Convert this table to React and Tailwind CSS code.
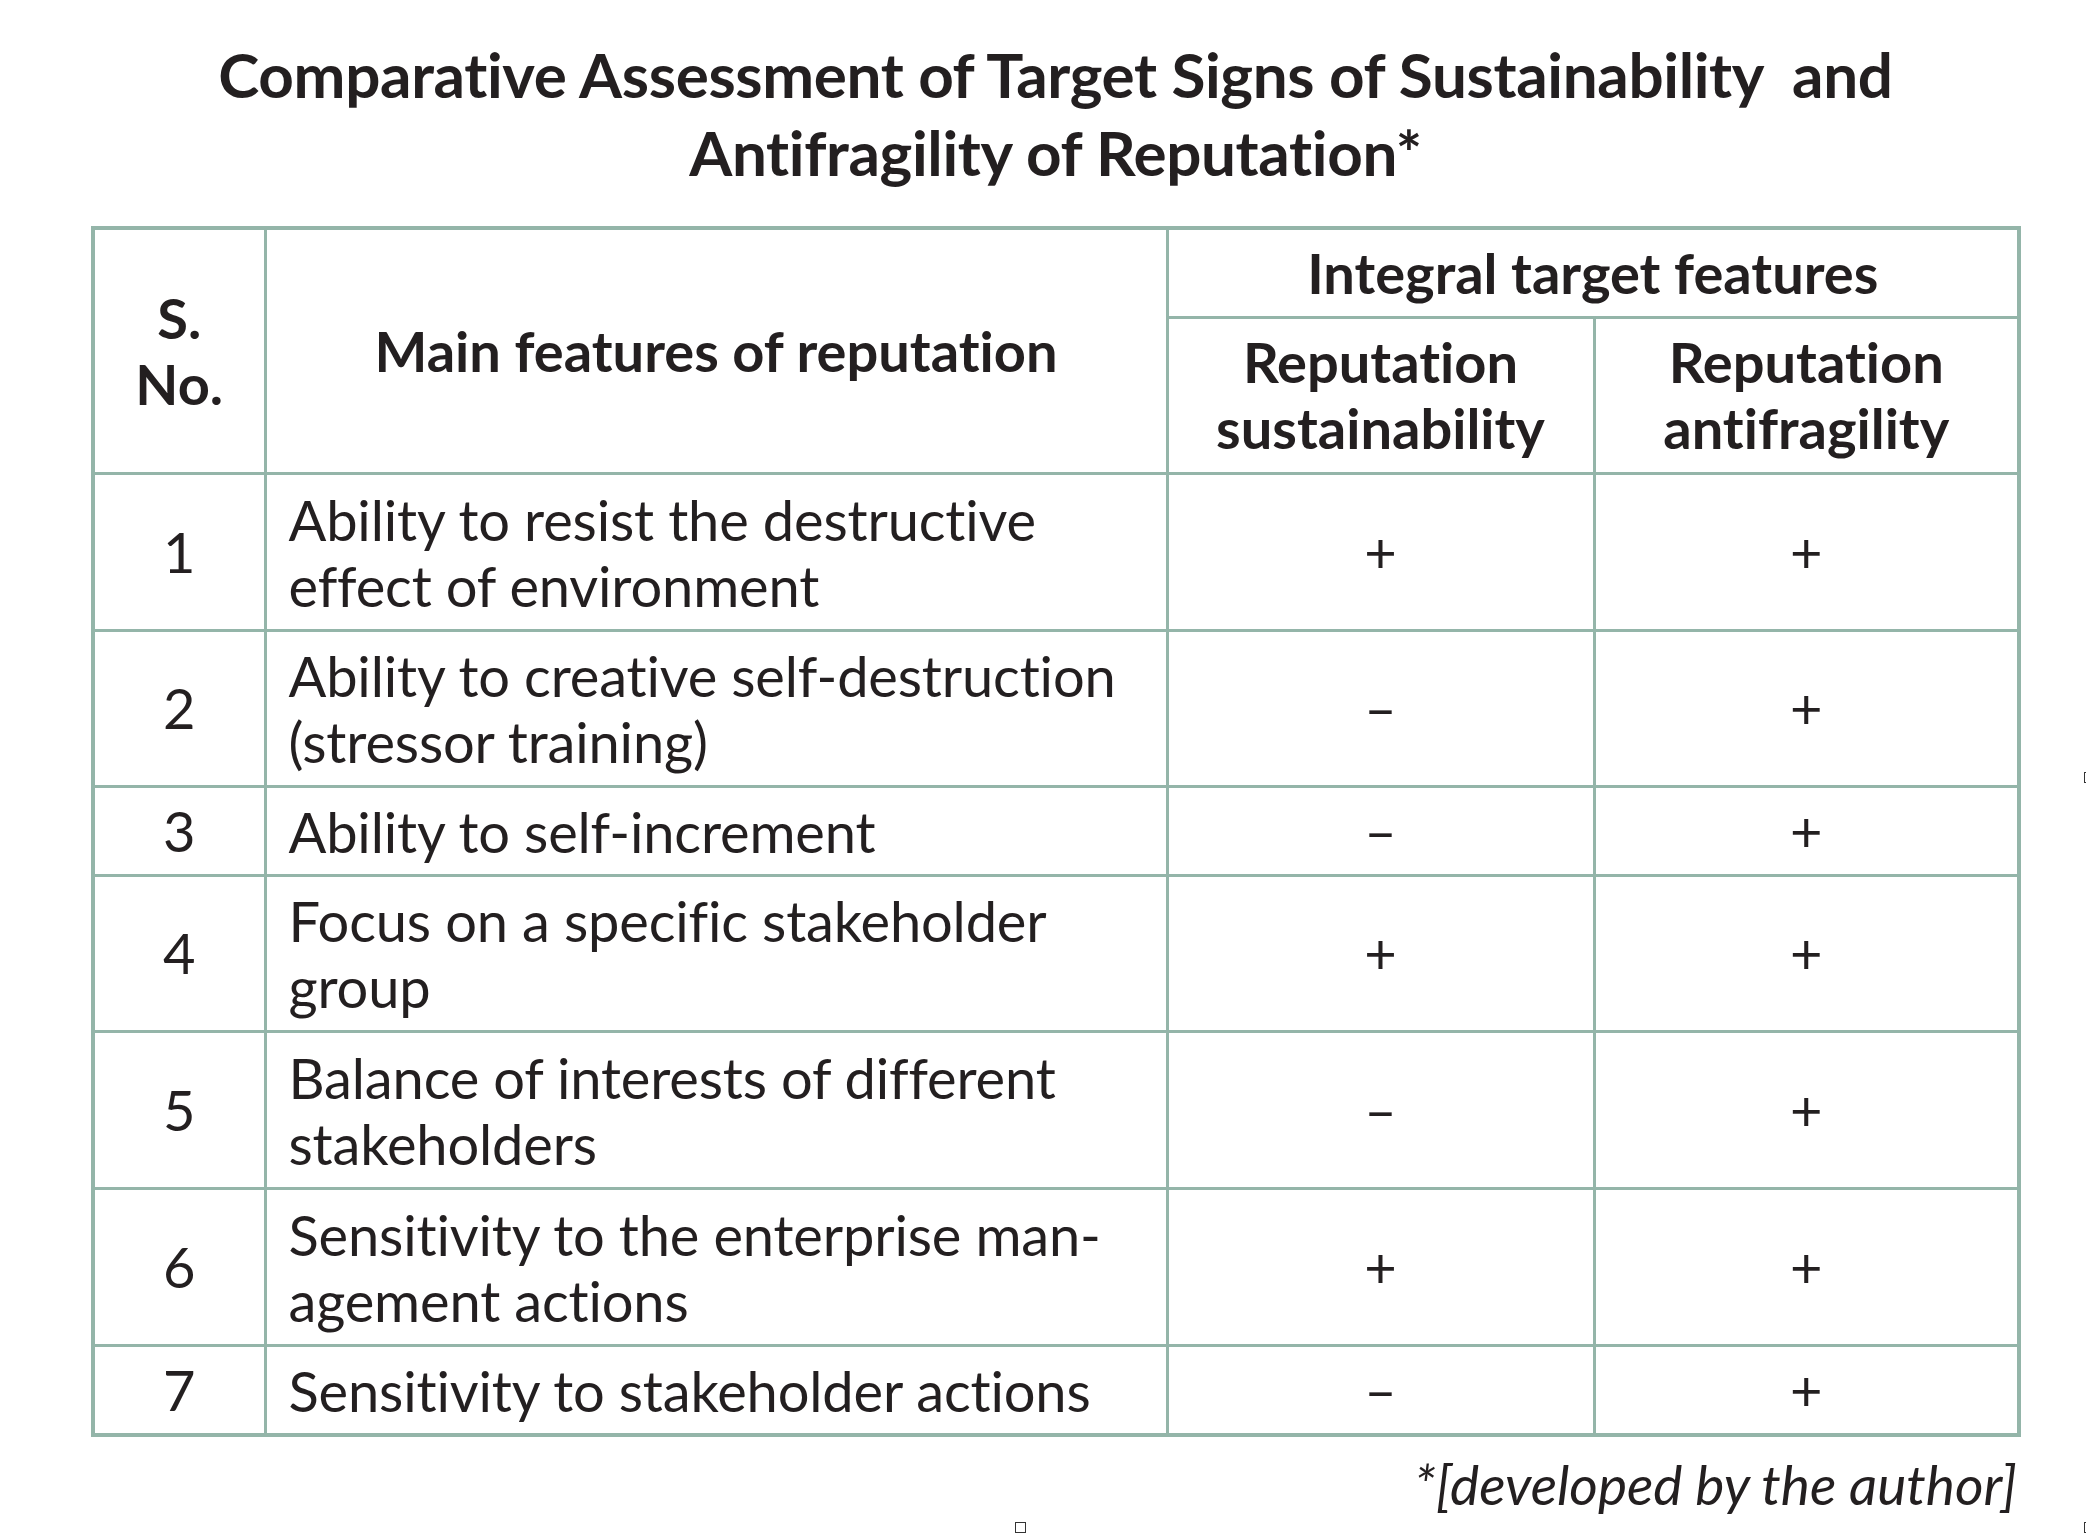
import React from "react";

const rows = [
  { n: "1", text: ["Ability to resist the destructive", "effect of environment"], s: "+", a: "+", h: "h-[157px]" },
  { n: "2", text: ["Ability to creative self-destruction", "(stressor training)"], s: "\u2013", a: "+", h: "h-[156px]" },
  { n: "3", text: ["Ability to self-increment"], s: "\u2013", a: "+", h: "h-[89px]" },
  { n: "4", text: ["Focus on a specific stakeholder", "group"], s: "+", a: "+", h: "h-[156px]" },
  { n: "5", text: ["Balance of interests of different", "stakeholders"], s: "\u2013", a: "+", h: "h-[157px]" },
  { n: "6", text: ["Sensitivity to the enterprise man-", "agement actions"], s: "+", a: "+", h: "h-[157px]" },
  { n: "7", text: ["Sensitivity to stakeholder actions"], s: "\u2013", a: "+", h: "h-[90px]" },
];

const cell = "border-[3px] border-[#94b5a9]";

export default function App() {
  return (
    <div className="relative w-[2086px] h-[1538px] bg-white text-[#231f20] font-['Lato','Noto_Sans',sans-serif] [font-variant-ligatures:none] overflow-hidden">
      <div className="ml-[91px] w-[1926px] pt-[35px]">
        <h1 className="text-center font-bold text-[62px] leading-[78px] tracking-[-0.35px] pl-[3px]">
          Comparative Assessment of Target Signs of Sustainability{"\u00a0"} and
          <br />
          Antifragility of Reputation*
        </h1>

        <table className="mt-[35px] w-[1926px] table-fixed border-collapse border-[4px] border-[#94b5a9] text-[56px] leading-[66px]">
          <colgroup>
            <col className="w-[172px]" />
            <col className="w-[902px]" />
            <col className="w-[427px]" />
            <col className="w-[425px]" />
          </colgroup>
          <thead>
            <tr className="h-[89px]">
              <th rowSpan={2} className={`${cell} font-bold align-middle text-center`}>
                S.
                <br />
                No.
              </th>
              <th rowSpan={2} className={`${cell} font-bold align-middle text-center`}>
                Main features of reputation
              </th>
              <th colSpan={2} className={`${cell} font-bold align-middle text-center`}>
                Integral target features
              </th>
            </tr>
            <tr className="h-[156px]">
              <th className={`${cell} font-bold align-middle text-center`}>
                Reputation
                <br />
                sustainability
              </th>
              <th className={`${cell} font-bold align-middle text-center`}>
                Reputation
                <br />
                antifragility
              </th>
            </tr>
          </thead>
          <tbody>
            {rows.map((r) => (
              <tr key={r.n} className={r.h}>
                <td className={`${cell} text-center align-middle`}>{r.n}</td>
                <td className={`${cell} pl-[22px] pr-[10px] pt-[2px] text-left align-middle tracking-[-0.15px]`}>
                  {r.text.map((t, i) => (
                    <div key={i}>{t}</div>
                  ))}
                </td>
                <td className={`${cell} text-center align-middle`}>{r.s}</td>
                <td className={`${cell} text-center align-middle`}>{r.a}</td>
              </tr>
            ))}
          </tbody>
        </table>

        <p className="mt-[17px] text-right italic text-[55px] leading-[60px]">
          *[developed by the author]
        </p>
      </div>

      <span className="absolute left-[1015px] top-[1522px] w-[11px] h-[11px] border border-[#333]" />
      <span className="absolute left-[2084px] top-[1522px] w-[11px] h-[11px] border border-[#333]" />
      <span className="absolute left-[2084px] top-[772px] w-[11px] h-[11px] border border-[#333]" />
    </div>
  );
}
